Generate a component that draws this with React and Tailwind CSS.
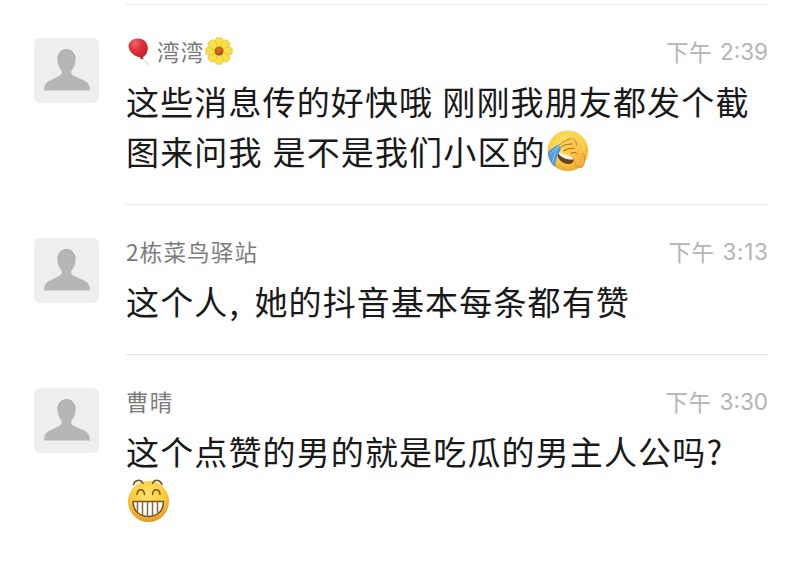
const nameFont = "font-['Noto_Sans_CJK_SC',sans-serif]";

function Avatar() {
  return (
    <div className="mt-[33px] h-[65px] w-[65px] shrink-0 overflow-hidden rounded-[6px] bg-[#eeeeee]">
      <svg viewBox="0 0 65 65" className="block h-full w-full">
        <path
          d="M32.500 11.300C38 11.300 41.500 15.500 41.500 22C41.500 26.500 39.800 30 37.500 32.500C36.600 35.500 37.500 36.800 40 38L49 42C53.600 44 56 46.500 56 52.600H10C10 46.500 12.400 44 17 42L25 38C27.500 36.800 28.400 35.500 27.500 32.500C25.200 30 23.500 26.500 23.500 22C23.500 15.500 27 11.300 32.500 11.300Z"
          fill="#b6b6b6"
        />
        <path d="M24 21C24.400 15 27.500 11.800 32.500 11.800S40.700 15 41 21" fill="none" stroke="#a5a5a5" strokeWidth="0.900" />
      </svg>
    </div>
  );
}

function Balloon() {
  return (
    <svg viewBox="0 0 30 30" className="mr-[1px] h-[30px] w-[30px] shrink-0">
      <defs>
        <radialGradient id="balloon" cx="0.35" cy="0.25" r="0.8">
          <stop offset="0" stopColor="#f0686b" />
          <stop offset="0.4" stopColor="#e0333c" />
          <stop offset="1" stopColor="#c01c29" />
        </radialGradient>
      </defs>
      <path d="M16 22C17.500 22.500 17.500 24 19 25.500C20.500 26.800 22 27 23 29" fill="none" stroke="#c9bfc0" strokeWidth="0.8" />
      <path d="M11.500 2.500C17 2 21.800 6 21.800 12C21.800 16.500 19.500 19.500 16.800 21.300L17.500 23L14.500 23.200L14.600 21.500C8 20.500 2.800 15.500 2.600 10.500C2.500 5.800 6.500 2.900 11.500 2.500Z" fill="url(#balloon)" />
    </svg>
  );
}

function Flower() {
  const petals = [0, 45, 90, 135, 180, 225, 270, 315];
  return (
    <svg viewBox="0 0 28 28" className="ml-[1px] h-[28px] w-[28px] shrink-0">
      <defs>
        <radialGradient id="center" cx="0.45" cy="0.35" r="0.65">
          <stop offset="0" stopColor="#d9792a" />
          <stop offset="1" stopColor="#a94c10" />
        </radialGradient>
      </defs>
      {petals.map((a) => (
        <path
          key={a}
          transform={`rotate(${a} 14 14)`}
          d="M12.300 11C9.500 6.500 9.300 2.300 11.500 1C12.800 0.300 13.300 0.800 14 1C14.700 0.800 15.200 0.300 16.500 1C18.700 2.300 18.500 6.500 15.700 11Z"
          fill="#f8e046"
          stroke="#d8b426"
          strokeWidth="0.6"
        />
      ))}
      <circle cx="14" cy="14" r="4.500" fill="url(#center)" />
    </svg>
  );
}

function Facepalm() {
  return (
    <svg viewBox="0 0 42 42" className="ml-[1px] h-[42px] w-[42px] shrink-0">
      <defs>
        <radialGradient id="palmFace" cx="0.48" cy="0.38" r="0.62">
          <stop offset="0" stopColor="#ffe57a" />
          <stop offset="0.65" stopColor="#fdd04b" />
          <stop offset="1" stopColor="#e9a42c" />
        </radialGradient>
        <linearGradient id="hand" x1="0" y1="0" x2="0.8" y2="1">
          <stop offset="0" stopColor="#ffd766" />
          <stop offset="0.6" stopColor="#fcc24a" />
          <stop offset="1" stopColor="#f3aa36" />
        </linearGradient>
      </defs>
      <circle cx="20.800" cy="20.800" r="20.300" fill="url(#palmFace)" />
      <path d="M10.500 22C14 25.500 20 27 27 26.500C28 31 25.500 34.500 20.500 34C14.500 33.300 9.500 28.500 10.500 22Z" fill="#6f3f1b" />
      <path d="M10.800 21.500C15 24.500 20 26.500 26 26.200L26 29.500C20 30 12.500 27.500 10.800 21.500Z" fill="#fff" />
      <path d="M14.500 13.500C9 15.500 3 19 1 22.500C1 28.500 3.500 33.300 8 37C8.500 30 11 24 14.500 18.500Z" fill="#5299d6" />
      <path d="M3.500 24C6 20.500 8.500 18 11.500 16.500C8 22 6.500 28 5.500 32.500" fill="none" stroke="#86bfe9" strokeWidth="1.200" />
      <path d="M13 14.500C15 11.500 20 10 24 8.500C31 7.500 37 15 36.500 23C38.500 28 38.500 33.500 35 37.500C29.500 38 26.500 33 26.500 28C23 27.500 22.500 25 24 23.500C20 24.500 16 23 16.500 21C13.500 20.500 12.500 18.500 13.500 17.500C12 17 12 15.500 13 14.500Z" fill="url(#hand)" />
      <path d="M13.500 17.500C17 14.500 21 14 25 14M16.500 21C20 18.500 23 18 27 18.500M24 23.500C26 22 28 22 30 23.500" fill="none" stroke="#a8641b" strokeWidth="1" strokeLinecap="round" />
      <path d="M13 14.500C15 11.500 20 10 24 8.500M26 8.500C28.500 10 29.500 12.500 29.500 15" fill="none" stroke="#b8741f" strokeWidth="0.900" strokeLinecap="round" />
      <path d="M26.500 28C26.500 33 29.500 38 35 37.500C38 34 38.500 28 36.500 23" fill="none" stroke="#d68a21" strokeWidth="0.800" />
    </svg>
  );
}

function Grin() {
  return (
    <svg viewBox="0 0 44 46" className="mt-[2px] block h-[46px] w-[44px]">
      <defs>
        <radialGradient id="grinFace" cx="0.48" cy="0.35" r="0.65">
          <stop offset="0" stopColor="#ffe36b" />
          <stop offset="0.65" stopColor="#fccb3b" />
          <stop offset="1" stopColor="#e39522" />
        </radialGradient>
      </defs>
      <circle cx="22.500" cy="23.500" r="20.500" fill="url(#grinFace)" />
      <g fill="none" stroke="#76501c" strokeWidth="1.500" strokeLinecap="round">
        <path d="M7.500 6.700C8.500 2 14.500 0.500 17 5.300M26.500 5.300C29 0.500 34.500 2 36 6.700" />
        <path d="M11 16.500C11.500 10 18 10 18.500 16.500M26.500 16.500C27 10 33.500 10 34 16.500" />
      </g>
      <path d="M7 23.500H37.500C37.500 33 31.500 38.500 22.500 38.500S7 33 7 23.500Z" fill="#fff" stroke="#76501c" strokeWidth="1.500" strokeLinejoin="round" />
      <path d="M11.500 24V33.500M16.500 24V37M21.500 24V38.500M26.500 24V38M31.500 24V35.500" stroke="#87683e" strokeWidth="1.500" />
    </svg>
  );
}

function Comment({ name, time, timeClass = "tracking-normal", className, children }) {
  return (
    <article className={`flex pl-[34px] ${className}`}>
      <Avatar />
      <div className="ml-[27px] w-[642px] border-b border-[#e5e5e5]">
        <header className="mt-[31px] flex h-[30px] items-center justify-between">
          <div className={`flex items-center text-[22.500px] leading-[30px] tracking-[1.200px] text-[#7b7b7b] ${nameFont}`}>{name}</div>
          <time className="flex items-center leading-[30px] text-[#b4b4b4]">
            <span className={`text-[22.500px] tracking-[0.500px] ${nameFont}`}>下午</span>
            <span className={`ml-[8px] mt-[1px] font-['Inter','Noto_Sans_CJK_SC',sans-serif] text-[22.500px] ${timeClass}`}>{time}</span>
          </time>
        </header>
        <div className={`mt-[10px] whitespace-nowrap text-[33px] leading-[50px] tracking-[1.140px] text-[#191919] ${nameFont}`}>{children}</div>
      </div>
    </article>
  );
}

export default function App() {
  return (
    <main className="h-[580px] w-[800px] overflow-hidden bg-white">
      <div className="ml-[126px] h-[5px] w-[642px] border-b border-[#ededed]" />
      <Comment className="h-[200px]" time="2:39" name={<><Balloon /><span>湾湾</span><Flower /></>}>
        <p>这些消息传的好快哦<span className="inline-block w-[9px]"> </span>刚刚我朋友都发个截</p>
        <p className="flex h-[50px] items-center">图来问我<span className="w-[10px]"> </span>是不是我们小区的<Facepalm /></p>
      </Comment>
      <Comment className="h-[150px]" time="3:13" timeClass="tracking-[0.700px] -mr-[0.700px]" name="2栋菜鸟驿站">
        <p className="flex">这个人<span className="w-[26px] pl-px">,</span>她的抖音基本每条都有赞</p>
      </Comment>
      <Comment className="h-[226px]" time="3:30" name="曹晴">
        <p>这个点赞的男的就是吃瓜的男主人公吗?</p>
        <Grin />
      </Comment>
    </main>
  );
}
